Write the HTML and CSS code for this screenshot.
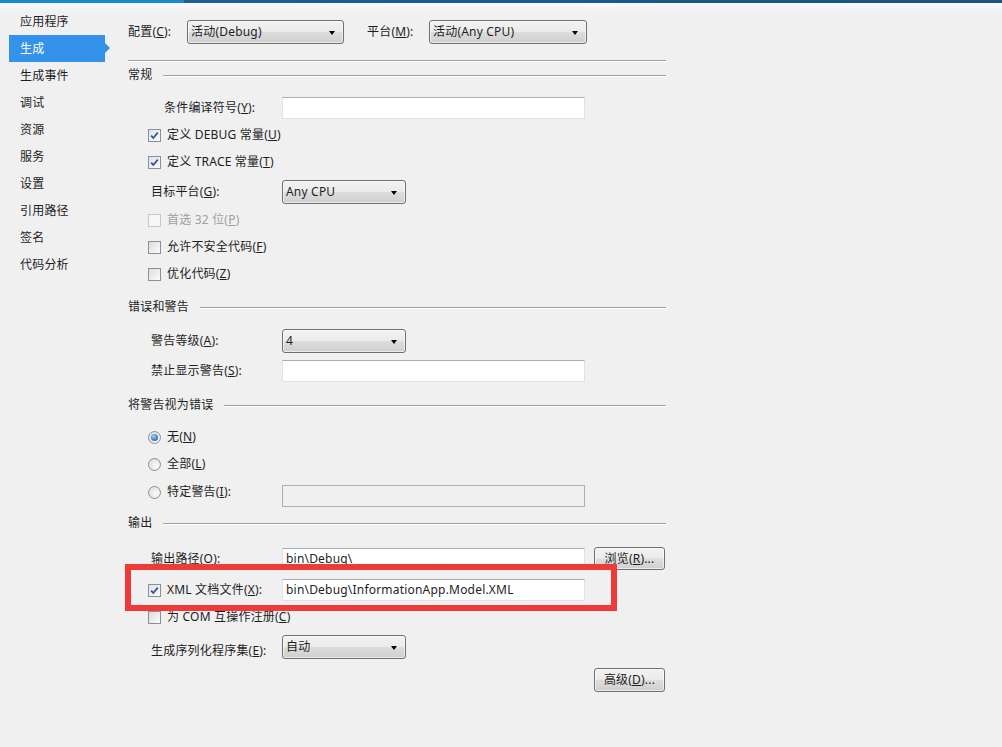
FILE: index.html
```html
<!DOCTYPE html>
<html>
<head>
<meta charset="utf-8">
<link rel="stylesheet" href="styles.css">
</head>
<body>
<div class="topbar"><div class="tb-left"></div><div class="tb-right"></div></div>
<div class="layout">
  <nav class="nav">
    <div class="nav-item">应用程序</div>
    <div class="nav-item active">生成</div>
    <div class="nav-item">生成事件</div>
    <div class="nav-item">调试</div>
    <div class="nav-item">资源</div>
    <div class="nav-item">服务</div>
    <div class="nav-item">设置</div>
    <div class="nav-item">引用路径</div>
    <div class="nav-item">签名</div>
    <div class="nav-item">代码分析</div>
  </nav>
  <main class="main">
    <div class="row mt17">
      <span class="lbl w-cfg">配置(<u>C</u>):</span>
      <div class="select w157"><span>活动(Debug)</span><i class="arrow"></i></div>
      <span class="lbl w-plat">平台(<u>M</u>):</span>
      <div class="select w158"><span>活动(Any CPU)</span><i class="arrow"></i></div>
    </div>
    <div class="sep mt16"></div>

    <div class="section mt6"><span>常规</span><div class="line"></div></div>
    <div class="row ind-cond mt14">
      <span class="lbl w-cond">条件编译符号(<u>Y</u>):</span>
      <div class="input w303"></div>
    </div>
    <div class="row ind-cb mt8">
      <span class="cb checked"><svg width="11" height="11" viewBox="0 0 11 11"><path d="M2.2 5.6 L4.3 8 L8.8 2.6" fill="none" stroke="#3b4d86" stroke-width="1.7"/></svg></span>
      <span class="cb-text">定义 DEBUG 常量(<u>U</u>)</span>
    </div>
    <div class="row ind-cb mt11">
      <span class="cb checked"><svg width="11" height="11" viewBox="0 0 11 11"><path d="M2.2 5.6 L4.3 8 L8.8 2.6" fill="none" stroke="#3b4d86" stroke-width="1.7"/></svg></span>
      <span class="cb-text">定义 TRACE 常量(<u>T</u>)</span>
    </div>
    <div class="row ind-lbl mt10">
      <span class="lbl w-form">目标平台(<u>G</u>):</span>
      <div class="select w124"><span>Any CPU</span><i class="arrow"></i></div>
    </div>
    <div class="row ind-cb mt8">
      <span class="cb disabled"></span>
      <span class="cb-text dis">首选 32 位(<u>P</u>)</span>
    </div>
    <div class="row ind-cb mt11">
      <span class="cb"></span>
      <span class="cb-text">允许不安全代码(<u>F</u>)</span>
    </div>
    <div class="row ind-cb mt11">
      <span class="cb"></span>
      <span class="cb-text">优化代码(<u>Z</u>)</span>
    </div>

    <div class="section mt17"><span>错误和警告</span><div class="line"></div></div>
    <div class="row ind-lbl mt14">
      <span class="lbl w-form">警告等级(<u>A</u>):</span>
      <div class="select w124"><span>4</span><i class="arrow"></i></div>
    </div>
    <div class="row ind-lbl mt7">
      <span class="lbl w-form">禁止显示警告(<u>S</u>):</span>
      <div class="input w303"></div>
    </div>

    <div class="section mt15"><span>将警告视为错误</span><div class="line"></div></div>
    <div class="row ind-cb mt16">
      <span class="rb on"></span>
      <span class="cb-text">无(<u>N</u>)</span>
    </div>
    <div class="row ind-cb mt11">
      <span class="rb"></span>
      <span class="cb-text">全部(<u>L</u>)</span>
    </div>
    <div class="row top ind-cb mt12">
      <span class="rb up"></span>
      <span class="cb-text w-rbform">特定警告(<u>I</u>):</span>
      <div class="input disabled w303"></div>
    </div>

    <div class="section mt8"><span>输出</span><div class="line"></div></div>
    <div class="row ind-lbl mt16">
      <span class="lbl w-form">输出路径(<u>O</u>):</span>
      <div class="input w303"><span>bin\Debug\</span></div>
      <div class="button browse">浏览(<u>R</u>)...</div>
    </div>
    <div class="row ind-cb mt9">
      <span class="cb checked"><svg width="11" height="11" viewBox="0 0 11 11"><path d="M2.2 5.6 L4.3 8 L8.8 2.6" fill="none" stroke="#3b4d86" stroke-width="1.7"/></svg></span>
      <span class="cb-text w-cbform">XML 文档文件(<u>X</u>):</span>
      <div class="input w303"><span>bin\Debug\InformationApp.Model.XML</span></div>
    </div>
    <div class="row ind-cb mt8">
      <span class="cb"></span>
      <span class="cb-text">为 COM 互操作注册(<u>C</u>)</span>
    </div>
    <div class="row top ind-lbl mt10">
      <span class="lbl w-form low">生成序列化程序集(<u>E</u>):</span>
      <div class="select w124"><span>自动</span><i class="arrow"></i></div>
    </div>
    <div class="row end mt9">
      <div class="button">高级(<u>D</u>)...</div>
    </div>
  </main>
</div>
<div class="mark"></div>
</body>
</html>
```

FILE: styles.css
```css
html, body {
  margin: 0;
  padding: 0;
}
body {
  width: 1002px;
  height: 747px;
  overflow: hidden;
  background: linear-gradient(#f9fbfd 0px, #f3f4f6 8px, #f0f0f0 12px);
  font-family: "Noto Sans", "Noto Sans CJK SC", sans-serif;
  font-size: 12px;
  line-height: 16px;
  letter-spacing: 0.2px;
  color: #1e1e1e;
  position: relative;
}
u { text-decoration: underline; text-underline-offset: 1px; }

.topbar {
  display: flex;
  height: 3px;
}
.tb-left { width: 184px; background: #1c86cf; }
.tb-right { flex: 1; background: linear-gradient(90deg, #1c5f91, #1a5480); }

.layout {
  display: flex;
  align-items: flex-start;
}

.nav {
  margin-left: 9px;
  padding-top: 5px;
  width: 96px;
  display: flex;
  flex-direction: column;
}
.nav-item {
  height: 27px;
  line-height: 27px;
  padding-left: 11px;
  position: relative;
}
.nav-item.active {
  background: #3592ea;
  color: #fff;
}
.nav-item.active::after {
  content: "";
  position: absolute;
  right: -5px;
  top: 8px;
  border-top: 5px solid transparent;
  border-bottom: 5px solid transparent;
  border-left: 5px solid #3592ea;
}

.main {
  margin-left: 23px;
  width: 538px;
  display: flex;
  flex-direction: column;
}

.row { display: flex; align-items: center; }
.row.top { align-items: flex-start; }
.row.end { justify-content: flex-end; padding-right: 1px; }

.mt6 { margin-top: 6px; }
.mt7 { margin-top: 7px; }
.mt8 { margin-top: 8px; }
.mt9 { margin-top: 9px; }
.mt10 { margin-top: 10px; }
.mt11 { margin-top: 11px; }
.mt12 { margin-top: 12px; }
.mt14 { margin-top: 14px; }
.mt15 { margin-top: 15px; }
.mt16 { margin-top: 16px; }
.mt17 { margin-top: 17px; }

.lbl { white-space: nowrap; }
.w-cfg { width: 59px; }
.w-plat { width: 62px; margin-left: 23px; }
.w-cond { width: 118px; }
.w-form { width: 131px; }
.w-rbform { width: 115px; }
.w-cbform { width: 115px; }
.lbl.low { margin-top: 8px; }

.ind-cond { padding-left: 36px; }
.ind-lbl { padding-left: 23px; }
.ind-cb { padding-left: 20px; }

.sep {
  height: 1px;
  background: #a0a0a0;
  box-shadow: 0 1px 0 #ffffff;
}

.section {
  display: flex;
  align-items: center;
  height: 16px;
}
.section .line {
  flex: 1;
  margin-left: 11px;
  height: 1px;
  background: #a0a0a0;
  box-shadow: 0 1px 0 #ffffff;
}

.select {
  box-sizing: border-box;
  height: 24px;
  border: 1px solid #707070;
  border-radius: 3px;
  background: linear-gradient(#f2f2f2 0%, #ebebeb 48%, #dddddd 52%, #cfcfcf 100%);
  box-shadow: inset 0 0 0 1px rgba(255,255,255,0.6);
  display: flex;
  align-items: center;
  justify-content: space-between;
  padding: 0 8px 0 3px;
  white-space: nowrap;
}
.w157 { width: 157px; }
.w158 { width: 158px; }
.w124 { width: 124px; }
.arrow {
  width: 0;
  height: 0;
  border-left: 3.5px solid transparent;
  border-right: 3.5px solid transparent;
  border-top: 4px solid #000;
  margin-top: 1px;
}

.input {
  box-sizing: border-box;
  height: 22px;
  background: #fff;
  border: 1px solid #dde2e8;
  border-top-color: #abadb3;
  border-left-color: #e2e3ea;
  display: flex;
  align-items: center;
  padding-left: 3px;
  white-space: nowrap;
}
.input.disabled {
  background: #f0f0f0;
  border: 1px solid #adadad;
  margin-top: 1px;
}
.w303 { width: 303px; }

.button {
  box-sizing: border-box;
  width: 71px;
  height: 24px;
  border: 1px solid #707070;
  border-radius: 3px;
  background: linear-gradient(#f2f2f2 0%, #ebebeb 48%, #dddddd 52%, #cfcfcf 100%);
  box-shadow: inset 0 0 0 1px rgba(255,255,255,0.6);
  display: flex;
  align-items: center;
  justify-content: center;
  white-space: nowrap;
}
.button.browse { margin-left: 9px; height: 23px; }

.cb {
  box-sizing: border-box;
  width: 13px;
  height: 13px;
  border: 1px solid #8e8f8f;
  background: linear-gradient(135deg, #dcdcdc, #fbfbfb);
  display: flex;
  align-items: center;
  justify-content: center;
  flex: none;
}
.cb.checked {
  background: linear-gradient(135deg, #d9e4f2, #f8fbff);
}
.cb.disabled {
  border-color: #c8c8c8;
  background: #f6f6f6;
}
.cb-text {
  margin-left: 6px;
  white-space: nowrap;
}
.cb-text.dis { color: #a0a0a0; }

.rb {
  box-sizing: border-box;
  width: 13px;
  height: 13px;
  border-radius: 50%;
  border: 1px solid #8e8f8f;
  background: radial-gradient(circle at 65% 65%, #fbfbfb 0%, #e2e2e2 70%);
  flex: none;
  display: flex;
  align-items: center;
  justify-content: center;
}
.rb.up { margin-top: 2px; }
.rb.on::before {
  content: "";
  width: 7px;
  height: 7px;
  border-radius: 50%;
  background: radial-gradient(circle at 40% 35%, #a9d3f7 0%, #3a86cf 55%, #1d4f9a 100%);
}
.row.top .cb-text { line-height: 16px; }

.mark {
  position: absolute;
  left: 125px;
  top: 564px;
  width: 492px;
  height: 47px;
  box-sizing: border-box;
  border: 6px solid #ef3a3a;
}
```
